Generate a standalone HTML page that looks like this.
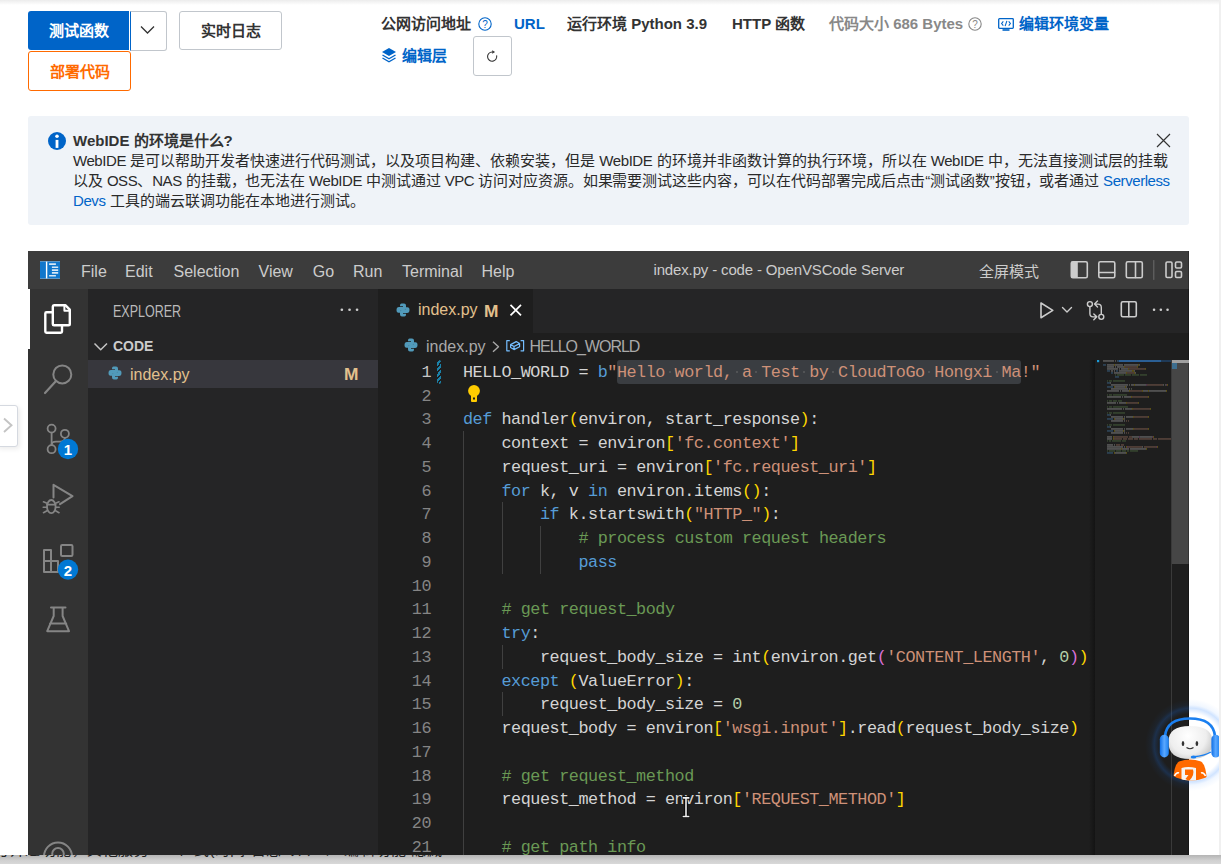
<!DOCTYPE html>
<html lang="zh-CN"><head><meta charset="utf-8">
<style>
*{box-sizing:border-box;margin:0;padding:0}
html,body{width:1221px;height:864px;overflow:hidden;background:#fff;font-family:"Liberation Sans",sans-serif;position:relative}
.abs{position:absolute}
.topshadow{left:0;top:0;width:1221px;height:5px;background:linear-gradient(#ececec,#fff)}
.btn{position:absolute;display:flex;align-items:center;justify-content:center;font-size:15px;font-weight:bold;border-radius:3px;padding-bottom:2px}
.t15{position:absolute;font-size:15px;line-height:20px;white-space:nowrap;font-weight:bold;color:#333}
.info{left:28px;top:116px;width:1161px;height:109px;background:#eff3f8;border-radius:3px}
.txt{position:absolute;font-size:15px;line-height:20px;color:#2a2a2a;white-space:nowrap}
.vs{left:28px;top:251px;width:1161px;height:604px;background:#1e1e1e;overflow:hidden}
.menu{position:absolute;top:261.5px;font-size:16px;line-height:20px;color:#cccccc;white-space:nowrap}
.ln{position:absolute;left:380px;width:51px;text-align:right;font-family:"Liberation Mono",monospace;font-size:16.8px;letter-spacing:-0.455px;line-height:23.75px;height:23.75px}
.cl{position:absolute;left:463px;font-family:"Liberation Mono",monospace;font-size:16.8px;line-height:23.75px;height:23.75px;white-space:pre;letter-spacing:-0.455px}
.sel{background:#3a3d41;border-radius:3px;display:inline-block;height:23.75px;vertical-align:top;margin-top:-1.2px;padding-top:1.2px}
.ws{font-style:normal;position:relative}
.ws::after{content:"";position:absolute;left:3.8px;top:8.3px;width:2px;height:2px;border-radius:1px;background:#5a5b5d}
.ui{position:absolute;white-space:nowrap;font-size:16px;line-height:20px}
.lt{letter-spacing:-0.43px}
</style></head><body>
<div class="abs topshadow"></div>

<div class="btn" style="left:28px;top:11px;width:101px;height:39px;background:#0064c8;color:#fff;border-radius:3px 0 0 3px">测试函数</div>
<div class="btn" style="left:130px;top:11px;width:37px;height:39.5px;border:1px solid #c1c6cc;border-left:1px solid #0064c8;border-radius:0 3px 3px 0;padding:0 2px 0 0">
<svg width="15" height="10" viewBox="0 0 15 10" style="margin-top:-1px"><path d="M1 1.5 L7.5 8 L14 1.5" fill="none" stroke="#333" stroke-width="1.3"/></svg></div>
<div class="btn" style="left:179px;top:11px;width:103px;height:39px;border:1px solid #c1c6cc;color:#333">实时日志</div>
<div class="btn" style="left:28px;top:51px;width:103px;height:40px;border:1px solid #ff6a00;color:#ff6a00">部署代码</div>

<div class="t15" style="left:381px;top:14px">公网访问地址</div>
<svg class="abs" style="left:478px;top:17px" width="14" height="14" viewBox="0 0 14 14"><circle cx="7" cy="7" r="6.2" fill="none" stroke="#0064c8" stroke-width="1.1"/><text x="7" y="10.5" font-size="10" text-anchor="middle" fill="#0064c8" font-family="Liberation Sans">?</text></svg>
<div class="t15" style="left:514px;top:14px;color:#0064c8">URL</div>
<div class="t15" style="left:567px;top:14px">运行环境 Python 3.9</div>
<div class="t15" style="left:732px;top:14px">HTTP 函数</div>
<div class="t15" style="left:829px;top:14px;color:#888">代码大小 686 Bytes</div>
<svg class="abs" style="left:968px;top:17px" width="14" height="14" viewBox="0 0 14 14"><circle cx="7" cy="7" r="6.2" fill="none" stroke="#888" stroke-width="1.1"/><text x="7" y="10.5" font-size="10" text-anchor="middle" fill="#888" font-family="Liberation Sans">?</text></svg>
<svg class="abs" style="left:998px;top:18px" width="16" height="13" viewBox="0 0 16 13"><rect x="0.7" y="0.7" width="14.6" height="9.6" rx="0.8" fill="none" stroke="#0064c8" stroke-width="1.3"/><rect x="4.5" y="11.2" width="7" height="1.6" fill="#0064c8"/><path d="M5.3 3.3 L3.6 5.5 L5.3 7.7 M10.7 3.3 L12.4 5.5 L10.7 7.7 M8.9 2.8 L7.1 8.2" fill="none" stroke="#0064c8" stroke-width="1.1"/></svg>
<div class="t15" style="left:1019px;top:14px;color:#0064c8">编辑环境变量</div>

<svg class="abs" style="left:381px;top:47px" width="16" height="16" viewBox="0 0 16 16"><path d="M8 1 L15 5 L8 9 L1 5 Z" fill="#0064c8"/><path d="M1.5 8 L8 11.8 L14.5 8" fill="none" stroke="#0064c8" stroke-width="1.4"/><path d="M1.5 11 L8 14.8 L14.5 11" fill="none" stroke="#0064c8" stroke-width="1.4"/></svg>
<div class="t15" style="left:402px;top:46px;color:#0064c8">编辑层</div>
<div class="abs" style="left:473px;top:36px;width:39px;height:40px;border:1px solid #c1c6cc;border-radius:3px"></div>
<svg class="abs" style="left:486px;top:49px" width="14" height="14" viewBox="0 0 14 14"><path d="M10.6 6.4 A4.6 4.6 0 1 1 6.15 3" fill="none" stroke="#333" stroke-width="1.1"/><path d="M6.2 1.3 L9.1 3 L6.2 4.7 Z" fill="#333"/></svg>

<div class="info abs"></div>
<svg class="abs" style="left:48px;top:132px" width="18" height="18" viewBox="0 0 18 18"><circle cx="9" cy="9" r="9" fill="#0064c8"/><circle cx="9" cy="4.3" r="1.75" fill="#fff"/><rect x="7.6" y="7.9" width="2.8" height="8" fill="#fff"/></svg>
<div class="t15" style="left:73px;top:131px">WebIDE 的环境是什么?</div>
<div class="txt" style="left:73px;top:151px"><span class="lt">WebIDE</span> 是可以帮助开发者快速进行代码测试，以及项目构建、依赖安装，但是 <span class="lt">WebIDE</span> 的环境并非函数计算的执行环境，所以在 <span class="lt">WebIDE</span> 中，无法直接测试层的挂载</div>
<div class="txt" style="left:73px;top:171px;letter-spacing:-0.1px">以及 <span class="lt">OSS</span>、<span class="lt">NAS</span> 的挂载，也无法在 <span class="lt">WebIDE</span> 中测试通过 <span class="lt">VPC</span> 访问对应资源。如果需要测试这些内容，可以在代码部署完成后点击“测试函数”按钮，或者通过 <span style="color:#0064c8"><span class="lt">Serverless</span></span></div>
<div class="txt" style="left:73px;top:191px"><span style="color:#0064c8"><span class="lt">Devs</span></span> 工具的端云联调功能在本地进行测试。</div>
<svg class="abs" style="left:1156px;top:133px" width="15" height="15" viewBox="0 0 15 15"><path d="M1 1 L14 14 M14 1 L1 14" stroke="#333" stroke-width="1.15"/></svg>

<div class="vs abs"></div>
<!-- title bar -->
<div class="abs" style="left:28px;top:251px;width:1161px;height:38px;background:#3c3c3c"></div>
<svg class="abs" style="left:40px;top:261px" width="20" height="18" viewBox="0 0 20 18"><rect width="20" height="18" fill="#1177cc"/><rect y="0" width="20" height="0.8" fill="#6d9cc4"/><rect y="17.2" width="20" height="0.8" fill="#6d9cc4"/><rect x="5.9" y="0.6" width="1.4" height="16.8" fill="#fff"/><path d="M9.1 3.1 H15.9 M11.9 6.2 H18.2 M11.9 9.1 H18.2 M11.9 11.9 H18.2 M9.1 14.8 H15.9" stroke="#d6e7f6" stroke-width="1.6"/></svg>
<div class="menu" style="left:81px">File</div>
<div class="menu" style="left:125px">Edit</div>
<div class="menu" style="left:173.5px">Selection</div>
<div class="menu" style="left:258.5px">View</div>
<div class="menu" style="left:312.8px">Go</div>
<div class="menu" style="left:353px">Run</div>
<div class="menu" style="left:402px">Terminal</div>
<div class="menu" style="left:481.5px">Help</div>
<div class="menu" style="left:653.5px;font-size:15px;top:260px;letter-spacing:-0.15px">index.py - code - OpenVSCode Server</div>
<div class="menu" style="left:979px;top:262px;font-size:15px">全屏模式</div>

<!-- activity bar -->
<div class="abs" style="left:28px;top:289px;width:60px;height:566px;background:#333333"></div>
<div class="abs" style="left:28px;top:289px;width:2px;height:60px;background:#ffffff"></div>
<!-- sidebar -->
<div class="abs" style="left:88px;top:289px;width:290px;height:566px;background:#252526"></div>
<div class="ui" style="left:113px;top:300.8px;font-size:16.5px;color:#bbbbbb;transform:scaleX(0.758);transform-origin:0 0">EXPLORER</div>
<div class="ui" style="left:113px;top:336px;font-size:14px;font-weight:bold;color:#cccccc">CODE</div>
<div class="abs" style="left:88px;top:360px;width:290px;height:27.5px;background:#37373d"></div>
<div class="ui" style="left:130px;top:365px;color:#e2c08d">index.py</div>
<div class="ui" style="left:344px;top:365px;color:#e2c08d;font-weight:bold;font-size:17px;transform:scaleX(1.02);transform-origin:0 0">M</div>

<!-- tabs -->
<div class="abs" style="left:378px;top:289px;width:811px;height:43.75px;background:#252526"></div>
<div class="abs" style="left:378px;top:289px;width:155px;height:43.75px;background:#1e1e1e"></div>
<div class="ui" style="left:418px;top:300px;color:#e2c08d">index.py</div>
<div class="ui" style="left:484px;top:301.8px;color:#e2c08d;font-weight:bold;font-size:17px;transform:scaleX(1.02);transform-origin:0 0">M</div>
<!-- breadcrumbs -->
<div class="ui" style="left:426px;top:337px;color:#a9a9a9">index.py</div>
<div class="ui" style="left:529.5px;top:337px;color:#a9a9a9;letter-spacing:-1px">HELLO_WORLD</div>

<div class="abs" style="left:463.0px;top:431.00px;width:1px;height:427.50px;background:#404040"></div>
<div class="abs" style="left:501.5px;top:502.25px;width:1px;height:71.25px;background:#404040"></div>
<div class="abs" style="left:540.0px;top:526.00px;width:1px;height:47.50px;background:#404040"></div>
<div class="abs" style="left:501.5px;top:644.75px;width:1px;height:23.75px;background:#404040"></div>
<div class="abs" style="left:501.5px;top:692.25px;width:1px;height:23.75px;background:#404040"></div>
<div class="ln" style="top:360.95px;color:#c6c6c6">1</div>
<div class="cl" style="top:360.95px"><span style="color:#d4d4d4">HELLO_WORLD = </span><span style="color:#569cd6">b</span><span style="color:#ce9178">"</span><span class="sel" style="color:#ce9178">Hello<i class="ws"> </i>world,<i class="ws"> </i>a<i class="ws"> </i>Test<i class="ws"> </i>by<i class="ws"> </i>CloudToGo<i class="ws"> </i>Hongxi<i class="ws"> </i>Ma</span><span style="color:#ce9178">!"</span></div>
<div class="ln" style="top:384.70px;color:#858585">2</div>
<div class="cl" style="top:384.70px"></div>
<div class="ln" style="top:408.45px;color:#858585">3</div>
<div class="cl" style="top:408.45px"><span style="color:#569cd6">def</span><span style="color:#d4d4d4"> </span><span style="color:#d4d4d4">handler</span><span style="color:#ffd700">(</span><span style="color:#d4d4d4">environ</span><span style="color:#d4d4d4">,</span><span style="color:#d4d4d4"> </span><span style="color:#d4d4d4">start_response</span><span style="color:#ffd700">)</span><span style="color:#d4d4d4">:</span></div>
<div class="ln" style="top:432.20px;color:#858585">4</div>
<div class="cl" style="top:432.20px"><span style="color:#d4d4d4"> </span><span style="color:#d4d4d4"> </span><span style="color:#d4d4d4"> </span><span style="color:#d4d4d4"> </span><span style="color:#d4d4d4">context</span><span style="color:#d4d4d4"> </span><span style="color:#d4d4d4">=</span><span style="color:#d4d4d4"> </span><span style="color:#d4d4d4">environ</span><span style="color:#ffd700">[</span><span style="color:#ce9178">&#x27;fc.context&#x27;</span><span style="color:#ffd700">]</span></div>
<div class="ln" style="top:455.95px;color:#858585">5</div>
<div class="cl" style="top:455.95px"><span style="color:#d4d4d4"> </span><span style="color:#d4d4d4"> </span><span style="color:#d4d4d4"> </span><span style="color:#d4d4d4"> </span><span style="color:#d4d4d4">request_uri</span><span style="color:#d4d4d4"> </span><span style="color:#d4d4d4">=</span><span style="color:#d4d4d4"> </span><span style="color:#d4d4d4">environ</span><span style="color:#ffd700">[</span><span style="color:#ce9178">&#x27;fc.request_uri&#x27;</span><span style="color:#ffd700">]</span></div>
<div class="ln" style="top:479.70px;color:#858585">6</div>
<div class="cl" style="top:479.70px"><span style="color:#d4d4d4"> </span><span style="color:#d4d4d4"> </span><span style="color:#d4d4d4"> </span><span style="color:#d4d4d4"> </span><span style="color:#569cd6">for</span><span style="color:#d4d4d4"> </span><span style="color:#d4d4d4">k</span><span style="color:#d4d4d4">,</span><span style="color:#d4d4d4"> </span><span style="color:#d4d4d4">v</span><span style="color:#d4d4d4"> </span><span style="color:#569cd6">in</span><span style="color:#d4d4d4"> </span><span style="color:#d4d4d4">environ</span><span style="color:#d4d4d4">.</span><span style="color:#d4d4d4">items</span><span style="color:#ffd700">(</span><span style="color:#ffd700">)</span><span style="color:#d4d4d4">:</span></div>
<div class="ln" style="top:503.45px;color:#858585">7</div>
<div class="cl" style="top:503.45px"><span style="color:#d4d4d4"> </span><span style="color:#d4d4d4"> </span><span style="color:#d4d4d4"> </span><span style="color:#d4d4d4"> </span><span style="color:#d4d4d4"> </span><span style="color:#d4d4d4"> </span><span style="color:#d4d4d4"> </span><span style="color:#d4d4d4"> </span><span style="color:#569cd6">if</span><span style="color:#d4d4d4"> </span><span style="color:#d4d4d4">k</span><span style="color:#d4d4d4">.</span><span style="color:#d4d4d4">startswith</span><span style="color:#ffd700">(</span><span style="color:#ce9178">&quot;HTTP_&quot;</span><span style="color:#ffd700">)</span><span style="color:#d4d4d4">:</span></div>
<div class="ln" style="top:527.20px;color:#858585">8</div>
<div class="cl" style="top:527.20px"><span style="color:#d4d4d4"> </span><span style="color:#d4d4d4"> </span><span style="color:#d4d4d4"> </span><span style="color:#d4d4d4"> </span><span style="color:#d4d4d4"> </span><span style="color:#d4d4d4"> </span><span style="color:#d4d4d4"> </span><span style="color:#d4d4d4"> </span><span style="color:#d4d4d4"> </span><span style="color:#d4d4d4"> </span><span style="color:#d4d4d4"> </span><span style="color:#d4d4d4"> </span><span style="color:#6a9955"># process custom request headers</span></div>
<div class="ln" style="top:550.95px;color:#858585">9</div>
<div class="cl" style="top:550.95px"><span style="color:#d4d4d4"> </span><span style="color:#d4d4d4"> </span><span style="color:#d4d4d4"> </span><span style="color:#d4d4d4"> </span><span style="color:#d4d4d4"> </span><span style="color:#d4d4d4"> </span><span style="color:#d4d4d4"> </span><span style="color:#d4d4d4"> </span><span style="color:#d4d4d4"> </span><span style="color:#d4d4d4"> </span><span style="color:#d4d4d4"> </span><span style="color:#d4d4d4"> </span><span style="color:#569cd6">pass</span></div>
<div class="ln" style="top:574.70px;color:#858585">10</div>
<div class="cl" style="top:574.70px"></div>
<div class="ln" style="top:598.45px;color:#858585">11</div>
<div class="cl" style="top:598.45px"><span style="color:#d4d4d4"> </span><span style="color:#d4d4d4"> </span><span style="color:#d4d4d4"> </span><span style="color:#d4d4d4"> </span><span style="color:#6a9955"># get request_body</span></div>
<div class="ln" style="top:622.20px;color:#858585">12</div>
<div class="cl" style="top:622.20px"><span style="color:#d4d4d4"> </span><span style="color:#d4d4d4"> </span><span style="color:#d4d4d4"> </span><span style="color:#d4d4d4"> </span><span style="color:#569cd6">try</span><span style="color:#d4d4d4">:</span></div>
<div class="ln" style="top:645.95px;color:#858585">13</div>
<div class="cl" style="top:645.95px"><span style="color:#d4d4d4"> </span><span style="color:#d4d4d4"> </span><span style="color:#d4d4d4"> </span><span style="color:#d4d4d4"> </span><span style="color:#d4d4d4"> </span><span style="color:#d4d4d4"> </span><span style="color:#d4d4d4"> </span><span style="color:#d4d4d4"> </span><span style="color:#d4d4d4">request_body_size</span><span style="color:#d4d4d4"> </span><span style="color:#d4d4d4">=</span><span style="color:#d4d4d4"> </span><span style="color:#d4d4d4">int</span><span style="color:#ffd700">(</span><span style="color:#d4d4d4">environ</span><span style="color:#d4d4d4">.</span><span style="color:#d4d4d4">get</span><span style="color:#da70d6">(</span><span style="color:#ce9178">&#x27;CONTENT_LENGTH&#x27;</span><span style="color:#d4d4d4">,</span><span style="color:#d4d4d4"> </span><span style="color:#b5cea8">0</span><span style="color:#da70d6">)</span><span style="color:#ffd700">)</span></div>
<div class="ln" style="top:669.70px;color:#858585">14</div>
<div class="cl" style="top:669.70px"><span style="color:#d4d4d4"> </span><span style="color:#d4d4d4"> </span><span style="color:#d4d4d4"> </span><span style="color:#d4d4d4"> </span><span style="color:#569cd6">except</span><span style="color:#d4d4d4"> </span><span style="color:#ffd700">(</span><span style="color:#d4d4d4">ValueError</span><span style="color:#ffd700">)</span><span style="color:#d4d4d4">:</span></div>
<div class="ln" style="top:693.45px;color:#858585">15</div>
<div class="cl" style="top:693.45px"><span style="color:#d4d4d4"> </span><span style="color:#d4d4d4"> </span><span style="color:#d4d4d4"> </span><span style="color:#d4d4d4"> </span><span style="color:#d4d4d4"> </span><span style="color:#d4d4d4"> </span><span style="color:#d4d4d4"> </span><span style="color:#d4d4d4"> </span><span style="color:#d4d4d4">request_body_size</span><span style="color:#d4d4d4"> </span><span style="color:#d4d4d4">=</span><span style="color:#d4d4d4"> </span><span style="color:#b5cea8">0</span></div>
<div class="ln" style="top:717.20px;color:#858585">16</div>
<div class="cl" style="top:717.20px"><span style="color:#d4d4d4"> </span><span style="color:#d4d4d4"> </span><span style="color:#d4d4d4"> </span><span style="color:#d4d4d4"> </span><span style="color:#d4d4d4">request_body</span><span style="color:#d4d4d4"> </span><span style="color:#d4d4d4">=</span><span style="color:#d4d4d4"> </span><span style="color:#d4d4d4">environ</span><span style="color:#ffd700">[</span><span style="color:#ce9178">&#x27;wsgi.input&#x27;</span><span style="color:#ffd700">]</span><span style="color:#d4d4d4">.</span><span style="color:#d4d4d4">read</span><span style="color:#ffd700">(</span><span style="color:#d4d4d4">request_body_size</span><span style="color:#ffd700">)</span></div>
<div class="ln" style="top:740.95px;color:#858585">17</div>
<div class="cl" style="top:740.95px"></div>
<div class="ln" style="top:764.70px;color:#858585">18</div>
<div class="cl" style="top:764.70px"><span style="color:#d4d4d4"> </span><span style="color:#d4d4d4"> </span><span style="color:#d4d4d4"> </span><span style="color:#d4d4d4"> </span><span style="color:#6a9955"># get request_method</span></div>
<div class="ln" style="top:788.45px;color:#858585">19</div>
<div class="cl" style="top:788.45px"><span style="color:#d4d4d4"> </span><span style="color:#d4d4d4"> </span><span style="color:#d4d4d4"> </span><span style="color:#d4d4d4"> </span><span style="color:#d4d4d4">request_method</span><span style="color:#d4d4d4"> </span><span style="color:#d4d4d4">=</span><span style="color:#d4d4d4"> </span><span style="color:#d4d4d4">environ</span><span style="color:#ffd700">[</span><span style="color:#ce9178">&#x27;REQUEST_METHOD&#x27;</span><span style="color:#ffd700">]</span></div>
<div class="ln" style="top:812.20px;color:#858585">20</div>
<div class="cl" style="top:812.20px"></div>
<div class="ln" style="top:835.95px;color:#858585">21</div>
<div class="cl" style="top:835.95px"><span style="color:#d4d4d4"> </span><span style="color:#d4d4d4"> </span><span style="color:#d4d4d4"> </span><span style="color:#d4d4d4"> </span><span style="color:#6a9955"># get path info</span></div>
<svg class="abs" style="left:0;top:0" width="1221" height="864"><rect x="1118.5" y="360" width="43" height="2" fill="#2b5f94"/><rect x="1161.5" y="360" width="9.5" height="2" fill="#1f3a57"/><rect x="1097" y="360" width="2.2" height="2.2" fill="#1b9ad6"/><rect x="1103" y="360.3" width="11" height="1.3" fill="#d4d4d4" opacity="0.4"/><rect x="1115" y="360.3" width="1" height="1.3" fill="#d4d4d4" opacity="0.4"/><rect x="1117" y="360.3" width="1" height="1.3" fill="#569cd6" opacity="0.5"/><rect x="1103" y="364.3" width="3" height="1.3" fill="#569cd6" opacity="0.4"/><rect x="1107" y="364.3" width="7" height="1.3" fill="#d4d4d4" opacity="0.4"/><rect x="1114" y="364.3" width="1" height="1.3" fill="#ffd700" opacity="0.4"/><rect x="1115" y="364.3" width="7" height="1.3" fill="#d4d4d4" opacity="0.4"/><rect x="1122" y="364.3" width="1" height="1.3" fill="#d4d4d4" opacity="0.4"/><rect x="1124" y="364.3" width="14" height="1.3" fill="#d4d4d4" opacity="0.4"/><rect x="1138" y="364.3" width="1" height="1.3" fill="#ffd700" opacity="0.4"/><rect x="1139" y="364.3" width="1" height="1.3" fill="#d4d4d4" opacity="0.4"/><rect x="1107" y="366.3" width="7" height="1.3" fill="#d4d4d4" opacity="0.4"/><rect x="1115" y="366.3" width="1" height="1.3" fill="#d4d4d4" opacity="0.4"/><rect x="1117" y="366.3" width="7" height="1.3" fill="#d4d4d4" opacity="0.4"/><rect x="1124" y="366.3" width="1" height="1.3" fill="#ffd700" opacity="0.4"/><rect x="1125" y="366.3" width="12" height="1.3" fill="#ce9178" opacity="0.4"/><rect x="1137" y="366.3" width="1" height="1.3" fill="#ffd700" opacity="0.4"/><rect x="1107" y="368.3" width="11" height="1.3" fill="#d4d4d4" opacity="0.4"/><rect x="1119" y="368.3" width="1" height="1.3" fill="#d4d4d4" opacity="0.4"/><rect x="1121" y="368.3" width="7" height="1.3" fill="#d4d4d4" opacity="0.4"/><rect x="1128" y="368.3" width="1" height="1.3" fill="#ffd700" opacity="0.4"/><rect x="1129" y="368.3" width="16" height="1.3" fill="#ce9178" opacity="0.4"/><rect x="1145" y="368.3" width="1" height="1.3" fill="#ffd700" opacity="0.4"/><rect x="1107" y="370.3" width="3" height="1.3" fill="#569cd6" opacity="0.4"/><rect x="1111" y="370.3" width="1" height="1.3" fill="#d4d4d4" opacity="0.4"/><rect x="1112" y="370.3" width="1" height="1.3" fill="#d4d4d4" opacity="0.4"/><rect x="1114" y="370.3" width="1" height="1.3" fill="#d4d4d4" opacity="0.4"/><rect x="1116" y="370.3" width="2" height="1.3" fill="#569cd6" opacity="0.4"/><rect x="1119" y="370.3" width="7" height="1.3" fill="#d4d4d4" opacity="0.4"/><rect x="1126" y="370.3" width="1" height="1.3" fill="#d4d4d4" opacity="0.4"/><rect x="1127" y="370.3" width="5" height="1.3" fill="#d4d4d4" opacity="0.4"/><rect x="1132" y="370.3" width="1" height="1.3" fill="#ffd700" opacity="0.4"/><rect x="1133" y="370.3" width="1" height="1.3" fill="#ffd700" opacity="0.4"/><rect x="1134" y="370.3" width="1" height="1.3" fill="#d4d4d4" opacity="0.4"/><rect x="1111" y="372.3" width="2" height="1.3" fill="#569cd6" opacity="0.4"/><rect x="1114" y="372.3" width="1" height="1.3" fill="#d4d4d4" opacity="0.4"/><rect x="1115" y="372.3" width="1" height="1.3" fill="#d4d4d4" opacity="0.4"/><rect x="1116" y="372.3" width="10" height="1.3" fill="#d4d4d4" opacity="0.4"/><rect x="1126" y="372.3" width="1" height="1.3" fill="#ffd700" opacity="0.4"/><rect x="1127" y="372.3" width="7" height="1.3" fill="#ce9178" opacity="0.4"/><rect x="1134" y="372.3" width="1" height="1.3" fill="#ffd700" opacity="0.4"/><rect x="1135" y="372.3" width="1" height="1.3" fill="#d4d4d4" opacity="0.4"/><rect x="1115" y="374.3" width="1" height="1.3" fill="#6a9955" opacity="0.4"/><rect x="1117" y="374.3" width="7" height="1.3" fill="#6a9955" opacity="0.4"/><rect x="1125" y="374.3" width="6" height="1.3" fill="#6a9955" opacity="0.4"/><rect x="1132" y="374.3" width="7" height="1.3" fill="#6a9955" opacity="0.4"/><rect x="1140" y="374.3" width="7" height="1.3" fill="#6a9955" opacity="0.4"/><rect x="1115" y="376.3" width="4" height="1.3" fill="#569cd6" opacity="0.4"/><rect x="1107" y="380.3" width="1" height="1.3" fill="#6a9955" opacity="0.4"/><rect x="1109" y="380.3" width="3" height="1.3" fill="#6a9955" opacity="0.4"/><rect x="1113" y="380.3" width="12" height="1.3" fill="#6a9955" opacity="0.4"/><rect x="1107" y="382.3" width="3" height="1.3" fill="#569cd6" opacity="0.4"/><rect x="1110" y="382.3" width="1" height="1.3" fill="#d4d4d4" opacity="0.4"/><rect x="1111" y="384.3" width="17" height="1.3" fill="#d4d4d4" opacity="0.4"/><rect x="1129" y="384.3" width="1" height="1.3" fill="#d4d4d4" opacity="0.4"/><rect x="1131" y="384.3" width="3" height="1.3" fill="#d4d4d4" opacity="0.4"/><rect x="1134" y="384.3" width="1" height="1.3" fill="#ffd700" opacity="0.4"/><rect x="1135" y="384.3" width="7" height="1.3" fill="#d4d4d4" opacity="0.4"/><rect x="1142" y="384.3" width="1" height="1.3" fill="#d4d4d4" opacity="0.4"/><rect x="1143" y="384.3" width="3" height="1.3" fill="#d4d4d4" opacity="0.4"/><rect x="1146" y="384.3" width="1" height="1.3" fill="#da70d6" opacity="0.4"/><rect x="1147" y="384.3" width="16" height="1.3" fill="#ce9178" opacity="0.4"/><rect x="1163" y="384.3" width="1" height="1.3" fill="#d4d4d4" opacity="0.4"/><rect x="1165" y="384.3" width="1" height="1.3" fill="#b5cea8" opacity="0.4"/><rect x="1166" y="384.3" width="1" height="1.3" fill="#da70d6" opacity="0.4"/><rect x="1167" y="384.3" width="1" height="1.3" fill="#ffd700" opacity="0.4"/><rect x="1107" y="386.3" width="6" height="1.3" fill="#569cd6" opacity="0.4"/><rect x="1114" y="386.3" width="1" height="1.3" fill="#ffd700" opacity="0.4"/><rect x="1115" y="386.3" width="10" height="1.3" fill="#d4d4d4" opacity="0.4"/><rect x="1125" y="386.3" width="1" height="1.3" fill="#ffd700" opacity="0.4"/><rect x="1126" y="386.3" width="1" height="1.3" fill="#d4d4d4" opacity="0.4"/><rect x="1111" y="388.3" width="17" height="1.3" fill="#d4d4d4" opacity="0.4"/><rect x="1129" y="388.3" width="1" height="1.3" fill="#d4d4d4" opacity="0.4"/><rect x="1131" y="388.3" width="1" height="1.3" fill="#b5cea8" opacity="0.4"/><rect x="1107" y="390.3" width="12" height="1.3" fill="#d4d4d4" opacity="0.4"/><rect x="1120" y="390.3" width="1" height="1.3" fill="#d4d4d4" opacity="0.4"/><rect x="1122" y="390.3" width="7" height="1.3" fill="#d4d4d4" opacity="0.4"/><rect x="1129" y="390.3" width="1" height="1.3" fill="#ffd700" opacity="0.4"/><rect x="1130" y="390.3" width="12" height="1.3" fill="#ce9178" opacity="0.4"/><rect x="1142" y="390.3" width="1" height="1.3" fill="#ffd700" opacity="0.4"/><rect x="1143" y="390.3" width="1" height="1.3" fill="#d4d4d4" opacity="0.4"/><rect x="1144" y="390.3" width="4" height="1.3" fill="#d4d4d4" opacity="0.4"/><rect x="1148" y="390.3" width="1" height="1.3" fill="#ffd700" opacity="0.4"/><rect x="1149" y="390.3" width="17" height="1.3" fill="#d4d4d4" opacity="0.4"/><rect x="1166" y="390.3" width="1" height="1.3" fill="#ffd700" opacity="0.4"/><rect x="1107" y="394.3" width="1" height="1.3" fill="#6a9955" opacity="0.4"/><rect x="1109" y="394.3" width="3" height="1.3" fill="#6a9955" opacity="0.4"/><rect x="1113" y="394.3" width="14" height="1.3" fill="#6a9955" opacity="0.4"/><rect x="1107" y="396.3" width="14" height="1.3" fill="#d4d4d4" opacity="0.4"/><rect x="1122" y="396.3" width="1" height="1.3" fill="#d4d4d4" opacity="0.4"/><rect x="1124" y="396.3" width="7" height="1.3" fill="#d4d4d4" opacity="0.4"/><rect x="1131" y="396.3" width="1" height="1.3" fill="#ffd700" opacity="0.4"/><rect x="1132" y="396.3" width="16" height="1.3" fill="#ce9178" opacity="0.4"/><rect x="1148" y="396.3" width="1" height="1.3" fill="#ffd700" opacity="0.4"/><rect x="1107" y="400.3" width="1" height="1.3" fill="#6a9955" opacity="0.4"/><rect x="1109" y="400.3" width="3" height="1.3" fill="#6a9955" opacity="0.4"/><rect x="1113" y="400.3" width="4" height="1.3" fill="#6a9955" opacity="0.4"/><rect x="1118" y="400.3" width="4" height="1.3" fill="#6a9955" opacity="0.4"/><rect x="1107" y="402.3" width="9" height="1.3" fill="#d4d4d4" opacity="0.4"/><rect x="1117" y="402.3" width="1" height="1.3" fill="#d4d4d4" opacity="0.4"/><rect x="1119" y="402.3" width="7" height="1.3" fill="#d4d4d4" opacity="0.4"/><rect x="1126" y="402.3" width="1" height="1.3" fill="#ffd700" opacity="0.4"/><rect x="1127" y="402.3" width="11" height="1.3" fill="#ce9178" opacity="0.4"/><rect x="1138" y="402.3" width="1" height="1.3" fill="#ffd700" opacity="0.4"/><rect x="1107" y="406.3" width="1" height="1.3" fill="#6a9955" opacity="0.4"/><rect x="1109" y="406.3" width="3" height="1.3" fill="#6a9955" opacity="0.4"/><rect x="1113" y="406.3" width="15" height="1.3" fill="#6a9955" opacity="0.4"/><rect x="1107" y="408.3" width="15" height="1.3" fill="#d4d4d4" opacity="0.4"/><rect x="1123" y="408.3" width="1" height="1.3" fill="#d4d4d4" opacity="0.4"/><rect x="1125" y="408.3" width="7" height="1.3" fill="#d4d4d4" opacity="0.4"/><rect x="1132" y="408.3" width="1" height="1.3" fill="#ffd700" opacity="0.4"/><rect x="1133" y="408.3" width="17" height="1.3" fill="#ce9178" opacity="0.4"/><rect x="1150" y="408.3" width="1" height="1.3" fill="#ffd700" opacity="0.4"/><rect x="1107" y="412.3" width="1" height="1.3" fill="#6a9955" opacity="0.4"/><rect x="1109" y="412.3" width="3" height="1.3" fill="#6a9955" opacity="0.4"/><rect x="1113" y="412.3" width="12" height="1.3" fill="#6a9955" opacity="0.4"/><rect x="1107" y="414.3" width="3" height="1.3" fill="#569cd6" opacity="0.4"/><rect x="1110" y="414.3" width="1" height="1.3" fill="#d4d4d4" opacity="0.4"/><rect x="1111" y="416.3" width="12" height="1.3" fill="#d4d4d4" opacity="0.4"/><rect x="1124" y="416.3" width="1" height="1.3" fill="#d4d4d4" opacity="0.4"/><rect x="1126" y="416.3" width="7" height="1.3" fill="#d4d4d4" opacity="0.4"/><rect x="1133" y="416.3" width="1" height="1.3" fill="#ffd700" opacity="0.4"/><rect x="1134" y="416.3" width="14" height="1.3" fill="#ce9178" opacity="0.4"/><rect x="1148" y="416.3" width="1" height="1.3" fill="#ffd700" opacity="0.4"/><rect x="1107" y="418.3" width="6" height="1.3" fill="#569cd6" opacity="0.4"/><rect x="1114" y="418.3" width="1" height="1.3" fill="#ffd700" opacity="0.4"/><rect x="1115" y="418.3" width="8" height="1.3" fill="#d4d4d4" opacity="0.4"/><rect x="1123" y="418.3" width="1" height="1.3" fill="#ffd700" opacity="0.4"/><rect x="1124" y="418.3" width="1" height="1.3" fill="#d4d4d4" opacity="0.4"/><rect x="1111" y="420.3" width="12" height="1.3" fill="#d4d4d4" opacity="0.4"/><rect x="1124" y="420.3" width="1" height="1.3" fill="#d4d4d4" opacity="0.4"/><rect x="1126" y="420.3" width="1" height="1.3" fill="#ce9178" opacity="0.4"/><rect x="1128" y="420.3" width="1" height="1.3" fill="#ce9178" opacity="0.4"/><rect x="1107" y="424.3" width="1" height="1.3" fill="#6a9955" opacity="0.4"/><rect x="1109" y="424.3" width="3" height="1.3" fill="#6a9955" opacity="0.4"/><rect x="1113" y="424.3" width="12" height="1.3" fill="#6a9955" opacity="0.4"/><rect x="1107" y="426.3" width="3" height="1.3" fill="#569cd6" opacity="0.4"/><rect x="1110" y="426.3" width="1" height="1.3" fill="#d4d4d4" opacity="0.4"/><rect x="1111" y="428.3" width="12" height="1.3" fill="#d4d4d4" opacity="0.4"/><rect x="1124" y="428.3" width="1" height="1.3" fill="#d4d4d4" opacity="0.4"/><rect x="1126" y="428.3" width="7" height="1.3" fill="#d4d4d4" opacity="0.4"/><rect x="1133" y="428.3" width="1" height="1.3" fill="#ffd700" opacity="0.4"/><rect x="1134" y="428.3" width="14" height="1.3" fill="#ce9178" opacity="0.4"/><rect x="1148" y="428.3" width="1" height="1.3" fill="#ffd700" opacity="0.4"/><rect x="1107" y="430.3" width="6" height="1.3" fill="#569cd6" opacity="0.4"/><rect x="1114" y="430.3" width="1" height="1.3" fill="#ffd700" opacity="0.4"/><rect x="1115" y="430.3" width="8" height="1.3" fill="#d4d4d4" opacity="0.4"/><rect x="1123" y="430.3" width="1" height="1.3" fill="#ffd700" opacity="0.4"/><rect x="1124" y="430.3" width="1" height="1.3" fill="#d4d4d4" opacity="0.4"/><rect x="1111" y="432.3" width="12" height="1.3" fill="#d4d4d4" opacity="0.4"/><rect x="1124" y="432.3" width="1" height="1.3" fill="#d4d4d4" opacity="0.4"/><rect x="1126" y="432.3" width="1" height="1.3" fill="#ce9178" opacity="0.4"/><rect x="1128" y="432.3" width="1" height="1.3" fill="#ce9178" opacity="0.4"/><rect x="1107" y="436.3" width="5" height="1.3" fill="#d4d4d4" opacity="0.4"/><rect x="1113" y="436.3" width="1" height="1.3" fill="#ffd700" opacity="0.4"/><rect x="1114" y="436.3" width="14" height="1.3" fill="#ce9178" opacity="0.4"/><rect x="1129" y="436.3" width="3" height="1.3" fill="#ce9178" opacity="0.4"/><rect x="1132" y="436.3" width="1" height="1.3" fill="#d4d4d4" opacity="0.4"/><rect x="1133" y="436.3" width="6" height="1.3" fill="#d4d4d4" opacity="0.4"/><rect x="1139" y="436.3" width="1" height="1.3" fill="#da70d6" opacity="0.4"/><rect x="1140" y="436.3" width="12" height="1.3" fill="#d4d4d4" opacity="0.4"/><rect x="1152" y="436.3" width="1" height="1.3" fill="#da70d6" opacity="0.4"/><rect x="1153" y="436.3" width="1" height="1.3" fill="#ffd700" opacity="0.4"/><rect x="1107" y="438.3" width="5" height="1.3" fill="#d4d4d4" opacity="0.4"/><rect x="1113" y="438.3" width="1" height="1.3" fill="#ffd700" opacity="0.4"/><rect x="1114" y="438.3" width="8" height="1.3" fill="#ce9178" opacity="0.4"/><rect x="1123" y="438.3" width="4" height="1.3" fill="#ce9178" opacity="0.4"/><rect x="1128" y="438.3" width="5" height="1.3" fill="#ce9178" opacity="0.4"/><rect x="1134" y="438.3" width="4" height="1.3" fill="#ce9178" opacity="0.4"/><rect x="1139" y="438.3" width="13" height="1.3" fill="#ce9178" opacity="0.4"/><rect x="1153" y="438.3" width="4" height="1.3" fill="#ce9178" opacity="0.4"/><rect x="1158" y="438.3" width="13" height="1.3" fill="#ce9178" opacity="0.4"/><rect x="1107" y="440.3" width="1" height="1.3" fill="#6a9955" opacity="0.4"/><rect x="1109" y="440.3" width="2" height="1.3" fill="#6a9955" opacity="0.4"/><rect x="1112" y="440.3" width="9" height="1.3" fill="#6a9955" opacity="0.4"/><rect x="1122" y="440.3" width="4" height="1.3" fill="#6a9955" opacity="0.4"/><rect x="1107" y="444.3" width="6" height="1.3" fill="#d4d4d4" opacity="0.4"/><rect x="1114" y="444.3" width="1" height="1.3" fill="#d4d4d4" opacity="0.4"/><rect x="1116" y="444.3" width="4" height="1.3" fill="#ce9178" opacity="0.4"/><rect x="1121" y="444.3" width="3" height="1.3" fill="#ce9178" opacity="0.4"/><rect x="1107" y="446.3" width="16" height="1.3" fill="#d4d4d4" opacity="0.4"/><rect x="1124" y="446.3" width="1" height="1.3" fill="#d4d4d4" opacity="0.4"/><rect x="1126" y="446.3" width="1" height="1.3" fill="#ffd700" opacity="0.4"/><rect x="1127" y="446.3" width="1" height="1.3" fill="#da70d6" opacity="0.4"/><rect x="1128" y="446.3" width="14" height="1.3" fill="#ce9178" opacity="0.4"/><rect x="1142" y="446.3" width="1" height="1.3" fill="#d4d4d4" opacity="0.4"/><rect x="1144" y="446.3" width="12" height="1.3" fill="#ce9178" opacity="0.4"/><rect x="1156" y="446.3" width="1" height="1.3" fill="#da70d6" opacity="0.4"/><rect x="1157" y="446.3" width="1" height="1.3" fill="#ffd700" opacity="0.4"/><rect x="1107" y="448.3" width="14" height="1.3" fill="#d4d4d4" opacity="0.4"/><rect x="1121" y="448.3" width="1" height="1.3" fill="#ffd700" opacity="0.4"/><rect x="1122" y="448.3" width="6" height="1.3" fill="#d4d4d4" opacity="0.4"/><rect x="1128" y="448.3" width="1" height="1.3" fill="#d4d4d4" opacity="0.4"/><rect x="1130" y="448.3" width="16" height="1.3" fill="#d4d4d4" opacity="0.4"/><rect x="1146" y="448.3" width="1" height="1.3" fill="#ffd700" opacity="0.4"/><rect x="1107" y="450.3" width="1" height="1.3" fill="#6a9955" opacity="0.4"/><rect x="1109" y="450.3" width="6" height="1.3" fill="#6a9955" opacity="0.4"/><rect x="1116" y="450.3" width="5" height="1.3" fill="#6a9955" opacity="0.4"/><rect x="1122" y="450.3" width="4" height="1.3" fill="#6a9955" opacity="0.4"/><rect x="1127" y="450.3" width="2" height="1.3" fill="#6a9955" opacity="0.4"/><rect x="1130" y="450.3" width="8" height="1.3" fill="#6a9955" opacity="0.4"/><rect x="1107" y="452.3" width="6" height="1.3" fill="#569cd6" opacity="0.4"/><rect x="1114" y="452.3" width="1" height="1.3" fill="#ffd700" opacity="0.4"/><rect x="1115" y="452.3" width="11" height="1.3" fill="#d4d4d4" opacity="0.4"/><rect x="1126" y="452.3" width="1" height="1.3" fill="#ffd700" opacity="0.4"/></svg>
<svg class="abs" style="left:0;top:0;pointer-events:none" width="1221" height="864" viewBox="0 0 1221 864">
<g fill="none" stroke-linecap="round" stroke-linejoin="round">
<!-- explorer -->
<g stroke="#ffffff" stroke-width="2.4">
<path d="M52.8 306.5 Q52.8 305.2 54 305.2 H65.3 L69.8 309.7 V324 Q69.8 325.3 68.5 325.3 H54 Q52.8 325.3 52.8 324 Z"/>
<path d="M64.4 305.6 V310.8 H69.4" stroke-width="2"/>
<path d="M52.8 312.2 H46.5 Q45.3 312.2 45.3 313.4 V331.6 Q45.3 332.8 46.5 332.8 H60.8 Q62 332.8 62 331.6 V325.8"/>
</g>
<g stroke="#858585" stroke-width="2">
<!-- search -->
<circle cx="62.3" cy="374.4" r="9"/>
<path d="M56 381 L45 393" stroke-width="2.2"/>
<!-- scm -->
<circle cx="51.6" cy="428.6" r="4" stroke-width="1.8"/>
<circle cx="64.9" cy="433.8" r="4" stroke-width="1.8"/>
<circle cx="51.6" cy="449.2" r="4" stroke-width="1.8"/>
<path d="M51.6 432.6 V445.2" stroke-width="1.8"/>
<path d="M64.9 437.8 Q64.9 441.7 60 441.7 H56 Q51.6 441.7 51.6 445" stroke-width="1.8"/>
<!-- debug -->
<path d="M53.5 497.5 V484.8 L72.5 496.2 L60 504.2"/>
<ellipse cx="51.3" cy="506.6" rx="4.3" ry="6.6" stroke-width="1.8"/>
<path d="M47 504.6 H55.6 M43.5 501.8 L47 503.2 M59 501.8 L55.6 503.2 M43.2 507.3 H47 M55.6 507.3 H59.2 M43.5 512.7 L47 510.8 M59 512.7 L55.6 510.8" stroke-width="1.6"/>
<!-- extensions -->
<path d="M44 550 H51 V572 H44 Z M44 561 H58 V572 H51" stroke-width="2"/>
<rect x="61" y="545" width="11.5" height="11" rx="1.2"/>
<!-- flask -->
<path d="M51 607.5 H65.5 M53.7 607.5 V616 L47.2 631.2 H69 L62.6 616 V607.5 M50 623.6 H66.2" stroke-width="2"/>
<!-- account -->
<circle cx="58" cy="856.5" r="14" stroke-width="2"/>
<circle cx="58" cy="853.8" r="5.8" stroke-width="2"/>
</g>
<!-- badges -->
<circle cx="68" cy="449" r="10.2" fill="#0078d4"/>
<text x="68" y="455" font-family="Liberation Sans" font-weight="bold" font-size="15" fill="#fff" text-anchor="middle">1</text>
<circle cx="68" cy="569.6" r="10.2" fill="#0078d4"/>
<text x="68" y="575.6" font-family="Liberation Sans" font-weight="bold" font-size="15" fill="#fff" text-anchor="middle">2</text>

<!-- sidebar -->
<path d="M341.8 309.7 h0.1 M349.5 309.7 h0.1 M357 309.7 h0.1" stroke="#cccccc" stroke-width="2.6"/>
<path d="M94.5 343.5 L100.7 349.7 L107 343.5" stroke="#c5c5c5" stroke-width="1.5" stroke-linecap="butt"/>

<!-- editor actions -->
<g stroke="#cccccc" stroke-width="1.6">
<path d="M1041 303 V317.8 L1052.8 310.4 Z"/>
<path d="M1062.5 307.5 L1067 312 L1071.5 307.5" stroke-width="1.4"/>
<circle cx="1089.9" cy="304.1" r="2.5" stroke-width="1.4"/>
<circle cx="1101.3" cy="316.85" r="2.5" stroke-width="1.4"/>
<path d="M1089.9 306.7 V313.5 Q1089.9 316.85 1093 316.85 H1096.8 M1093.8 313.9 L1096.8 316.85 L1093.8 319.8" stroke-width="1.4"/>
<path d="M1101.3 314.2 V307.5 Q1101.3 304.1 1098 304.1 H1094.5 M1097.5 301.1 L1094.5 304.1 L1097.5 307.1" stroke-width="1.4"/>
<rect x="1121.3" y="301.8" width="15" height="15" rx="1.5"/>
<path d="M1128.8 302 V316.6"/>
</g>
<path d="M1154 309.7 h0.1 M1160.8 309.7 h0.1 M1167.5 309.7 h0.1" stroke="#cccccc" stroke-width="2.5"/>
<!-- tab close -->
<path d="M510.5 304.8 L521 315.3 M521 304.8 L510.5 315.3" stroke="#ffffff" stroke-width="1.7" stroke-linecap="butt"/>
<!-- breadcrumb chevron -->
<path d="M493 341.8 L498.5 346.8 L493 351.8" stroke="#a9a9a9" stroke-width="1.4" stroke-linecap="butt"/>
<!-- symbol variable icon -->
<g stroke="#75beff" stroke-width="1.2" stroke-linecap="butt">
<path d="M509.8 340.6 H506.8 V350.8 H509.8 M520.6 340.6 H523.6 V350.8 H520.6"/>
<path d="M510.6 344.6 L516.2 341.6 L519.6 343.6 V346.8 L514 349.6 L510.6 347.6 Z M510.6 344.6 L514 346.5 L519.6 343.6 M514 346.5 V349.6"/>
</g>

<!-- title layout icons -->
<g stroke="#cccccc" stroke-width="1.6">
<rect x="1071.3" y="261.8" width="16" height="16" rx="1.5"/>
<rect x="1098.8" y="261.8" width="16" height="16" rx="1.5"/>
<path d="M1099 272.5 H1114.5"/>
<rect x="1126.3" y="261.8" width="16" height="16" rx="1.5"/>
<path d="M1135.5 262 V277.5"/>
<path d="M1153.8 260.5 V279.5" stroke="#6b6b6b" stroke-width="1"/>
<rect x="1166" y="262" width="6" height="15.5" rx="1.2"/>
<rect x="1175.5" y="262" width="6" height="6" rx="1.2"/>
<rect x="1175.5" y="271.5" width="6" height="6" rx="1.2"/>
</g>
<rect x="1071.3" y="261.8" width="6.5" height="16" fill="#cccccc"/>
</g>
</svg>
<!-- python icons -->
<svg class="abs" style="left:108px;top:366px" width="14" height="14" viewBox="0 0 14 14"><g fill="#519aba">
<path d="M5.5 0.5 H8 Q10 0.5 10 2.5 V5.5 Q10 7 8.5 7 H5.8 Q4.3 7 4.3 8.5 V9.8 H2.5 Q0.5 9.8 0.5 7 Q0.5 4 3 4 H7 V3.3 H4 V2.5 Q4 0.5 5.5 0.5 Z"/>
<path d="M8.5 13.5 H6 Q4 13.5 4 11.5 V8.5 Q4 7 5.5 7 H8.2 Q9.7 7 9.7 5.5 V4.2 H11.5 Q13.5 4.2 13.5 7 Q13.5 10 11 10 H7 V10.7 H10 V11.5 Q10 13.5 8.5 13.5 Z"/></g>
</svg>
<svg class="abs" style="left:396px;top:303px" width="14" height="14" viewBox="0 0 14 14"><g fill="#519aba">
<path d="M5.5 0.5 H8 Q10 0.5 10 2.5 V5.5 Q10 7 8.5 7 H5.8 Q4.3 7 4.3 8.5 V9.8 H2.5 Q0.5 9.8 0.5 7 Q0.5 4 3 4 H7 V3.3 H4 V2.5 Q4 0.5 5.5 0.5 Z"/>
<path d="M8.5 13.5 H6 Q4 13.5 4 11.5 V8.5 Q4 7 5.5 7 H8.2 Q9.7 7 9.7 5.5 V4.2 H11.5 Q13.5 4.2 13.5 7 Q13.5 10 11 10 H7 V10.7 H10 V11.5 Q10 13.5 8.5 13.5 Z"/></g></svg>
<svg class="abs" style="left:403.5px;top:338px" width="14" height="14" viewBox="0 0 14 14"><g fill="#519aba">
<path d="M5.5 0.5 H8 Q10 0.5 10 2.5 V5.5 Q10 7 8.5 7 H5.8 Q4.3 7 4.3 8.5 V9.8 H2.5 Q0.5 9.8 0.5 7 Q0.5 4 3 4 H7 V3.3 H4 V2.5 Q4 0.5 5.5 0.5 Z"/>
<path d="M8.5 13.5 H6 Q4 13.5 4 11.5 V8.5 Q4 7 5.5 7 H8.2 Q9.7 7 9.7 5.5 V4.2 H11.5 Q13.5 4.2 13.5 7 Q13.5 10 11 10 H7 V10.7 H10 V11.5 Q10 13.5 8.5 13.5 Z"/></g></svg>
<!-- dirty diff -->
<div class="abs" style="left:437px;top:360px;width:4px;height:24px;border-radius:2px;background:repeating-linear-gradient(-50deg,#1b81a8 0 2.2px,transparent 2.2px 3.6px)"></div>
<!-- lightbulb -->
<svg class="abs" style="left:467px;top:384px" width="14" height="19" viewBox="0 0 14 19"><circle cx="7" cy="6.8" r="5.9" fill="#ffcc00"/><rect x="4" y="11" width="6" height="7" rx="1" fill="#ffcc00"/><rect x="6" y="13.5" width="2" height="2" fill="#1e1e1e"/></svg>
<!-- minimap shadow + scrollbar -->
<div class="abs" style="left:1089px;top:359.75px;width:6px;height:495.25px;background:linear-gradient(90deg,rgba(0,0,0,0),rgba(0,0,0,0.35))"></div>
<div class="abs" style="left:1171px;top:359.75px;width:1px;height:495.25px;background:#3a3a3a"></div>
<div class="abs" style="left:1172px;top:360px;width:16.5px;height:204px;background:#464646"></div><div class="abs" style="left:1188px;top:251px;width:1px;height:604px;background:rgba(0,0,0,0.25)"></div>
<div class="abs" style="left:1172px;top:360px;width:16.5px;height:3px;background:#a0a0a0"></div>
<div class="abs" style="left:1172px;top:363px;width:5px;height:6px;background:#3d6e8f"></div>
<!-- mouse ibeam -->
<svg class="abs" style="left:680px;top:795px" width="12" height="24" viewBox="0 0 12 24"><path d="M2 2.9 H10 M6 2.9 V21.5 M2 21.5 H10" fill="none" stroke="#000" stroke-width="3.2"/><path d="M2.6 2.9 H9.4 M6 2.9 V21.5 M2.6 21.5 H9.4" fill="none" stroke="#f0f0f0" stroke-width="1.6"/></svg>
<!-- left tab -->
<div class="abs" style="left:-4px;top:405px;width:22px;height:42px;background:#fff;border:1px solid #d5d9e0;border-radius:3px;box-shadow:2px 2px 5px rgba(0,0,0,0.08)"></div>
<svg class="abs" style="left:2px;top:417px" width="13" height="17" viewBox="0 0 13 17"><path d="M2 1.5 L9.5 8.3 L2 15" fill="none" stroke="#c4c4c4" stroke-width="1.9"/></svg>
<!-- chatbot -->
<svg class="abs" style="left:1130px;top:680px" width="91" height="130" viewBox="0 0 91 130">
<defs>
<radialGradient id="glow" cx="61" cy="65" r="46" gradientUnits="userSpaceOnUse">
<stop offset="0.68" stop-color="#1677ff" stop-opacity="0"/>
<stop offset="0.8" stop-color="#1677ff" stop-opacity="0.2"/>
<stop offset="0.87" stop-color="#1677ff" stop-opacity="0.06"/>
<stop offset="1" stop-color="#1677ff" stop-opacity="0"/>
</radialGradient>
<radialGradient id="head" cx="58" cy="56" r="28" gradientUnits="userSpaceOnUse">
<stop offset="0" stop-color="#ffffff"/><stop offset="0.65" stop-color="#eeeeee"/><stop offset="1" stop-color="#c4c4c4"/>
</radialGradient>
<linearGradient id="cup" x1="0" x2="1"><stop offset="0" stop-color="#0f6fe6"/><stop offset="0.5" stop-color="#5aa8ff"/><stop offset="1" stop-color="#1a7ff0"/></linearGradient>
<clipPath id="cc"><circle cx="61" cy="63" r="37.5"/></clipPath>
</defs>
<circle cx="61" cy="65" r="46" fill="url(#glow)"/>
<g clip-path="url(#cc)">
<path d="M43 104 Q43.5 85 49 81.5 Q60 77.5 71 81.5 Q76.5 85 77 104 Z" fill="#ff6a00"/>
<path d="M51.5 88 Q58 86 66 88 V104 H51.5 Z" fill="#f4f4f4"/>
<path d="M55 89.5 H63 Q65 95 59 101 L55.5 99 L58.5 95 H55 Z" fill="#ff6a00"/>
<path d="M44.5 96 Q46.5 92 49 93 M75.5 96 Q73.5 92 71 93" stroke="#fff" stroke-width="1.6" fill="none"/>
</g>
<path d="M38.5 62 Q38 46 60 46 Q82.6 46 82.6 62 Q82.6 79 60 79 Q38 79 38.5 62 Z" fill="url(#head)"/>
<path d="M35 56 Q37 38.5 60 38.5 Q83 38.5 85 56" fill="none" stroke="#1a7ff0" stroke-width="2.6"/>
<rect x="29.8" y="54.8" width="9" height="22.6" rx="4.5" fill="url(#cup)"/>
<rect x="81.4" y="54.8" width="8.6" height="22.6" rx="4.3" fill="url(#cup)"/>
<path d="M64 76.7 Q74 76 81 72" fill="none" stroke="#1a7ff0" stroke-width="1.4"/>
<ellipse cx="63.5" cy="77" rx="2.8" ry="1.6" fill="#1a7ff0"/>
<ellipse cx="53" cy="63.5" rx="1.3" ry="2.6" fill="#333"/>
<ellipse cx="66.9" cy="63.5" rx="1.3" ry="2.6" fill="#333"/>
<path d="M56.5 67.5 Q60 70 63.5 67.5" fill="none" stroke="#333" stroke-width="1.2"/>
</svg>
<div class="abs" style="left:1219px;top:0;width:2px;height:855px;background:#f0f0f0"></div>
<!-- bottom bar -->
<div class="abs" style="left:0;top:855px;width:1221px;height:9px;background:linear-gradient(#b4b4b4,#d0d0d0 60%,#d8d8d8)"></div>
<div class="abs" style="left:0;top:855px;width:530px;height:3px;overflow:hidden">
<div style="position:absolute;left:-6px;top:-14px;font-size:15px;line-height:17px;color:#222;white-space:nowrap;letter-spacing:0.5px">与开通功能，其他服务 — 个 式(时间 日志 以 ）〈× 编辑功能 隐藏</div></div>

</body></html>
